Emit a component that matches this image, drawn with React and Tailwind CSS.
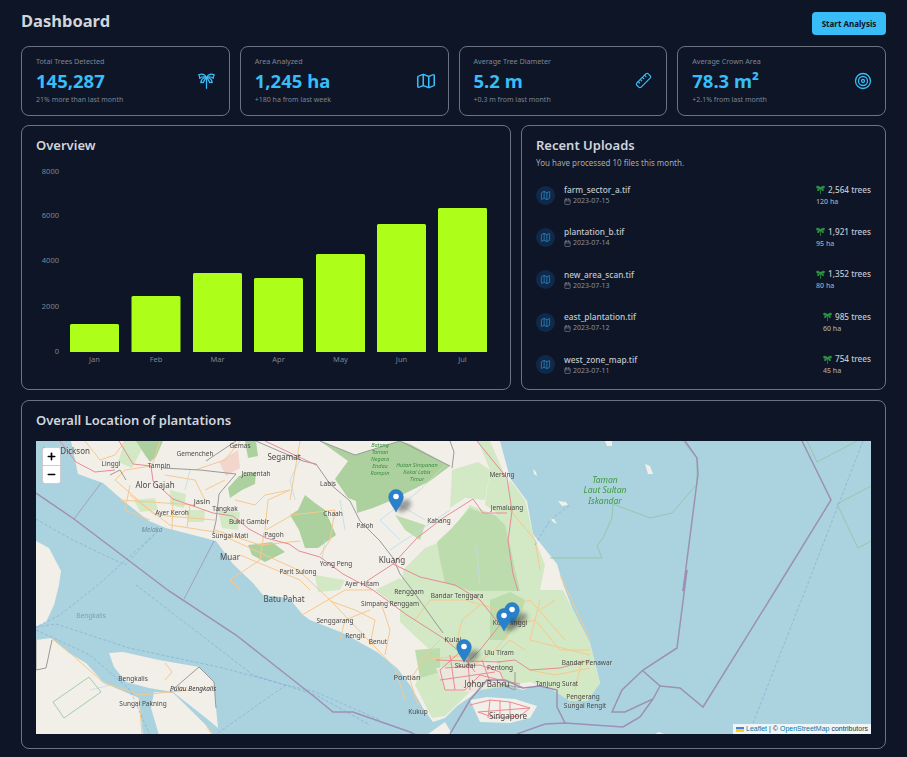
import { Map as MapIcon, Ruler, Target, Calendar, Plus, Minus } from 'lucide-react'

function PalmIcon({ className, filled }) {
  return (
    <svg viewBox="0 0 24 24" fill={filled ? 'currentColor' : 'none'} stroke="currentColor" strokeWidth="1.8" strokeLinejoin="round" strokeLinecap="round" className={className}>
      <path d="M12 23V8" fill="none" />
      <path d="M12 8C10 4 6 2 1 4c1 1 1.500 3 1.500 5 2-2 6-2.500 9.500-1z" />
      <path d="M12 8c2-4 6-6 11-4-1 1-1.500 3-1.500 5-2-2-6-2.500-9.500-1z" />
      <path d="M12 8c-4 0-7.500 2-8 7 1-.5 2.500-.5 3.500 0 .5-2.500 2.500-5 4.500-7z" />
      <path d="M12 8c4 0 7.500 2 8 7-1-.5-2.500-.5-3.500 0-.5-2.500-2.500-5-4.500-7z" />
    </svg>
  )
}

const STATS = [
  { label: 'Total Trees Detected', value: '145,287', note: '21% more than last month', icon: <PalmIcon className="h-[17px] w-[17px] text-[#38bdf8]" /> },
  { label: 'Area Analyzed', value: '1,245 ha', note: '+180 ha from last week', icon: <MapIcon width={22} height={18} preserveAspectRatio="none" strokeWidth={1.7} className="-mr-[3px] text-[#38bdf8]" /> },
  { label: 'Average Tree Diameter', value: '5.2 m', note: '+0.3 m from last month', icon: <Ruler size={17} strokeWidth={1.7} className="-scale-x-100 text-[#38bdf8]" /> },
  { label: 'Average Crown Area', value: '78.3 m²', note: '+2.1% from last month', icon: <Target size={18} strokeWidth={1.7} className="-mr-[1px] text-[#38bdf8]" /> },
]

const UPLOADS = [
  { name: 'farm_sector_a.tif', date: '2023-07-15', trees: '2,564 trees', area: '120 ha' },
  { name: 'plantation_b.tif', date: '2023-07-14', trees: '1,921 trees', area: '95 ha' },
  { name: 'new_area_scan.tif', date: '2023-07-13', trees: '1,352 trees', area: '80 ha' },
  { name: 'east_plantation.tif', date: '2023-07-12', trees: '985 trees', area: '60 ha' },
  { name: 'west_zone_map.tif', date: '2023-07-11', trees: '754 trees', area: '45 ha' },
]

const BARS = [
  { month: 'Jan', x: 70, top: 325 },
  { month: 'Feb', x: 131.5, top: 297 },
  { month: 'Mar', x: 193, top: 274 },
  { month: 'Apr', x: 254, top: 279 },
  { month: 'May', x: 316, top: 255 },
  { month: 'Jun', x: 377, top: 225 },
  { month: 'Jul', x: 438, top: 209 },
]

const TICKS = [
  { label: '8000', y: 172.5 },
  { label: '6000', y: 216 },
  { label: '4000', y: 261 },
  { label: '2000', y: 307 },
  { label: '0', y: 352.5 },
]

const LAND = [
  '71,441 78,474 103,483 126,503 149,521 166,528 216,541 233,564 253,583 263,595 289,598 303,615 310,620 343,633 377,652 397,668 410,685 423,708 433,722 445,718 457,706 470,697 487,682 505,684 523,690 540,684 553,690 570,701 587,701 600,683 590,643 573,610 563,584 557,564 533,534 527,501 510,478 500,441',
  '36,541 49,548 61,571 59,585 54,605 46,622 36,627',
  '36,640 51,638 69,653 86,663 104,683 139,698 143,735 36,735',
  '109,653 123,652 159,660 199,667 214,682 216,708 218,728 206,718 173,692 149,688 126,682 114,667',
  '154,692 173,693 206,725 213,735 159,735 151,708',
  '428,734 445,722 452,734',
  '645,464 650,466 653,474 648,474',
  '605,441 612,441 612,446 607,446',
  '558,501 566,502 568,505 562,506',
  '550,518 554,519 557,524 553,522',
  '533,469 536,472 537,476 534,474',
  '655,734 659,732 664,734',
]

const SOFT_GREEN = [
  '400,600 403,570 425,548 445,540 470,505 495,515 510,480 525,500 533,534 545,565 540,590 563,590 573,610 590,643 600,683 587,701 570,701 553,690 530,682 470,692 445,716 432,718 415,685 430,650 400,622',
  '478,441 490,441 506,478 512,505 500,515 485,505 490,470',
  '452,470 478,462 490,470 485,500 465,498 450,508',
  '118,462 132,468 146,441 125,441',
  '170,490 186,494 184,508 170,505',
  '134,500 155,498 158,510 140,512',
  '185,510 205,510 204,522 188,522',
  '218,510 240,512 238,530 222,528',
  '315,575 345,580 340,590 318,592',
  '375,590 400,578 412,590 395,605',
]

const FOREST = [
  '320,441 355,455 400,441 410,444 450,466 430,481 410,491 390,501 373,508 357,513 356,501 348,498 335,479 348,461',
  '305,495 315,503 325,510 336,535 318,548 305,548 299,530 290,515 298,510',
  '242,490 255,484 256,472 239,476 228,488 230,498',
  '136,441 163,441 156,457 150,462 145,455',
  '248,545 272,542 285,552 265,562 252,555',
  '245,441 256,441 258,456 248,458',
]

const MID_GREEN = [
  '440,560 437,542 450,530 470,508 480,512 495,515 505,525 510,545 515,570 520,591 470,591 445,583',
  '490,600 510,592 525,600 520,620 505,640 490,640',
  '415,650 440,648 440,672 420,678',
  '395,515 425,525 420,540 405,530',
]

const PINK = [
  '119,441 133,464 151,466 153,481 173,499 193,506 213,513 233,516 249,529 266,538 289,544 299,551 320,557 343,574 373,590 407,615 443,638 460,652 475,672',
  '367,581 393,564 417,538 443,518 473,499 483,513 507,513',
  '477,441 507,478 512,511 508,541 513,574 518,591',
  '460,652 440,670 445,690 465,690 480,675 500,680 520,684',
  '393,564 420,577 455,585 480,600 500,625 480,650 470,660',
  '470,705 490,700 510,702 530,708 520,716 495,718 478,712',
  '490,700 488,718',
  '500,700 500,718',
  '510,702 510,718',
  '478,712 530,708',
  '498,662 515,660 530,670 560,668 590,660',
  '445,668 480,665 500,672 505,684',
  '450,655 455,690',
  '468,660 470,690',
  '482,660 490,682',
  '440,680 495,672',
  '436,660 500,662',
  '60,441 76,462 95,472 115,470',
  '265,441 316,465',
]

const ORANGE = [
  '151,466 125,470 115,480 150,510 170,525 215,532 265,555 298,570 330,600 395,668 405,700',
  '173,499 172,530',
  '190,505 187,528',
  '120,500 195,505',
  '130,495 155,515 215,520',
  '215,530 260,545 300,541',
  '290,490 268,500 265,530',
  '266,530 292,515 335,510 330,540 320,555',
  '264,532 260,560 230,580 240,590',
  '240,555 300,580 310,590',
  '302,615 345,590 372,590',
  '330,601 355,610 375,620 370,645',
  '380,600 390,630 385,655',
  '415,620 430,600 465,600 500,610 530,600 565,640',
  '512,625 535,620 560,650 590,650',
  '590,640 560,575',
  '540,600 530,640 590,655',
  '512,630 495,650 475,665',
  '510,510 535,540 540,570',
  '480,605 462,620 455,650',
  '430,650 410,680 418,705',
  '160,441 152,466',
  '195,470 225,460 240,441',
  '300,441 295,470 290,500',
  '575,690 582,660 590,665',
  '104,683 140,695 190,690',
  '165,680 172,672 165,663',
  '173,692 206,725 212,735',
  '139,698 142,735',
  '51,638 70,653 104,683',
  '130,485 125,510 150,520',
  '165,475 195,480 205,500',
  '235,500 255,505 265,495 290,490',
  '225,480 205,490',
  '340,640 345,620 370,610',
  '440,640 420,660 470,655',
  '500,650 510,640 525,650',
  '590,668 555,675 530,670',
  '540,610 555,600',
  '85,441 100,460 115,455 125,441',
]

const GRAY_ROADS = [
  '163,468 200,470 236,474 219,494 216,521 213,534',
  '206,461 236,441',
  '256,441 279,451 303,461 316,464 330,484 350,501 360,521 380,541 393,558 400,574 413,591 430,615 443,633',
  '126,480 120,470 110,475',
  '400,441 450,466',
  '320,441 355,455 400,441',
  '170,692 199,667 214,682 216,708',
  '523,688 500,684 515,690 515,672',
  '450,441 454,452 452,468',
  '36,640 36,670 46,668 52,640',
]

const WATER_LINES = [
  '395,510 420,490 445,465',
  '400,540 380,520 400,505 425,520',
  '340,500 345,530',
  '390,550 420,530 450,510',
  '476,545 480,585',
  '300,460 290,480 295,500',
  '325,540 322,560',
  '190,470 185,490',
  '90,690 110,685 100,680',
]

const MAJOR_BORDER = [
  '36,493 74,519 169,591 236,635 316,698 333,712 353,712 410,732 416,735',
  '687,570 677,648 643,670 622,690 612,712 625,712 653,699 660,686 643,671',
  '660,686 680,688 703,707 775,591 831,500 802,441',
  '683,591 698,474 697,458 685,441',
  '687,570 683,591',
  '653,699 640,717 623,727 565,723 545,724 517,734',
  '565,723 557,707 557,690 540,686 523,688 505,680 487,680 470,700 450,734',
]

const MINOR_BORDER = [
  '101,483 74,519',
  '214,541 184,599',
]

const SHIPPING = [
  '863,441 805,591 753,723 745,735',
  '36,519 69,538 125,565 158,531',
  '158,531 99,584 60,615 36,627',
  '136,585 253,675 316,695 370,725',
  '36,627 56,624 129,648 223,668 286,685 316,692 380,720',
  '36,630 90,655 130,690 150,735',
  '286,685 215,735',
  '535,545 550,520 570,505',
]

const PARKS = [
  '683,441 697,458 697,484 672,513 650,518 618,506 613,504 612,518 603,538 597,546 602,558 550,558',
  '807,441 817,462 857,441',
  '871,486 837,504 858,548 871,541',
  '89,677 101,692 64,718 53,702 89,677',
]

const PLACES = [
  { t: 'Port Dickson', x: 90, y: 454, s: 8, a: 'end' },
  { t: 'Linggi', x: 111, y: 466, s: 6.5 },
  { t: 'Tampin', x: 159, y: 468, s: 6.5 },
  { t: 'Gemencheh', x: 195, y: 456, s: 6.5 },
  { t: 'Gemas', x: 240, y: 448, s: 6.5 },
  { t: 'Segamat', x: 284, y: 460, s: 8 },
  { t: 'Jementah', x: 256, y: 476, s: 6.5 },
  { t: 'Alor Gajah', x: 155, y: 488, s: 8 },
  { t: 'Jasin', x: 202, y: 504, s: 7.5 },
  { t: 'Tangkak', x: 225, y: 511, s: 6.5 },
  { t: 'Ayer Keroh', x: 172, y: 515, s: 6.5 },
  { t: 'Bukit Gambir', x: 249, y: 524, s: 6.5 },
  { t: 'Pagoh', x: 274, y: 537, s: 6.5 },
  { t: 'Sungai Mati', x: 230, y: 538, s: 6.5 },
  { t: 'Muar', x: 230, y: 560, s: 8 },
  { t: 'Parit Sulong', x: 298, y: 574, s: 6.5 },
  { t: 'Labis', x: 328, y: 486, s: 6.5 },
  { t: 'Chaah', x: 333, y: 516, s: 6.5 },
  { t: 'Paloh', x: 365, y: 528, s: 6.5 },
  { t: 'Kluang', x: 392, y: 563, s: 8 },
  { t: 'Yong Peng', x: 336, y: 566, s: 6.5 },
  { t: 'Ayer Hitam', x: 362, y: 586, s: 6.5 },
  { t: 'Kahang', x: 439, y: 523, s: 6.5 },
  { t: 'Mersing', x: 502, y: 477, s: 6.5 },
  { t: 'Jemaluang', x: 507, y: 510, s: 6.5 },
  { t: 'Renggam', x: 409, y: 594, s: 6.5 },
  { t: 'Bandar Tenggara', x: 457, y: 598, s: 6.5 },
  { t: 'Simpang Renggam', x: 390, y: 606, s: 6.5 },
  { t: 'Batu Pahat', x: 284, y: 602, s: 8 },
  { t: 'Senggarang', x: 335, y: 623, s: 6.5 },
  { t: 'Rengit', x: 355, y: 638, s: 6.5 },
  { t: 'Benut', x: 378, y: 644, s: 6.5 },
  { t: 'Pontian', x: 407, y: 680, s: 7.5 },
  { t: 'Kukup', x: 418, y: 714, s: 6.5 },
  { t: 'Kulai', x: 453, y: 642, s: 7.5 },
  { t: 'Skudai', x: 465, y: 668, s: 6.5 },
  { t: 'Ulu Tiram', x: 499, y: 655, s: 6.5 },
  { t: 'Pentong', x: 500, y: 670, s: 6.5 },
  { t: 'Johor Bahru', x: 487, y: 687, s: 8 },
  { t: 'Singapore', x: 508, y: 719, s: 8 },
  { t: 'Tanjung Surat', x: 557, y: 686, s: 6.5 },
  { t: 'Bandar Penawar', x: 587, y: 665, s: 6.5 },
  { t: 'Pengerang', x: 583, y: 699, s: 6.5 },
  { t: 'Sungai Rengit', x: 585, y: 708, s: 6.5 },
  { t: 'Kota Tinggi', x: 510, y: 625, s: 6.5 },
  { t: 'Bengkalis', x: 133, y: 681, s: 6.5 },
  { t: 'Sungai Pakning', x: 143, y: 706, s: 6.5 },
]

const PARK_LABELS = [
  { t: 'Batang', x: 380, y: 447 },
  { t: 'Taman', x: 380, y: 454 },
  { t: 'Negara', x: 380, y: 461 },
  { t: 'Endau', x: 380, y: 468 },
  { t: 'Rompin', x: 380, y: 475 },
  { t: 'Hutan Simpanan', x: 417, y: 467 },
  { t: 'Kekal Labis', x: 417, y: 474 },
  { t: 'Timur', x: 417, y: 481 },
]

const PINS = [
  { x: 396, y: 512 },
  { x: 512, y: 625 },
  { x: 504, y: 631 },
  { x: 464, y: 662 },
]

function Lines({ items, className }) {
  return items.map((points, i) => <polyline key={i} points={points} fill="none" className={className} />)
}

function Polys({ items, fill }) {
  return items.map((points, i) => <polygon key={i} points={points} fill={fill} />)
}

function PlantationMap() {
  return (
    <div className="relative h-[293px] overflow-hidden bg-[#aad3df]">
      <svg viewBox="36 441 835 293" className="block h-full w-full font-['Noto_Sans',sans-serif] blur-[0.3px]">
        <defs>
          <filter id="pin-shadow" x="-50%" y="-50%" width="200%" height="200%">
            <feGaussianBlur stdDeviation="2" />
          </filter>
        </defs>
        <Polys items={LAND} fill="#f2efe9" />
        <Polys items={SOFT_GREEN} fill="#d3e8c4" />
        <Polys items={MID_GREEN} fill="#bddcae" />
        <Polys items={FOREST} fill="#add19e" />
        <polygon points="219,462 238,450 240,468 226,476" fill="#f2d6ce" />
        <polygon points="470,700 487,697 515,699 537,706 530,718 510,723 480,722" fill="#f2efe9" />
        <polygon points="436,668 495,660 505,684 470,692 445,690" fill="#ece7dd" />
        <Lines items={WATER_LINES} className="stroke-[#bcdcea] stroke-[0.8]" />
        <Lines items={ORANGE} className="stroke-[#f7c88e] stroke-[1]" />
        <Lines items={GRAY_ROADS} className="stroke-[#9a9a9a] stroke-[1]" />
        <Lines items={PINK} className="stroke-[#e98a95] stroke-[1]" />
        <Lines items={PARKS} className="stroke-[#8cc5a0] stroke-[0.8]" />
        <Lines items={SHIPPING} className="stroke-[#7fa6cf] stroke-[0.6] [stroke-dasharray:3_2]" />
        <Lines items={MINOR_BORDER} className="stroke-[#9e94b5] stroke-[0.8]" />
        <Lines items={MAJOR_BORDER} className="stroke-[#9e90b3] stroke-[1.5]" />
        {PLACES.map((p) => (
          <text key={p.t} x={p.x} y={p.y} fontSize={p.s} textAnchor={p.a || 'middle'} fill="#4a4a4a">{p.t}</text>
        ))}
        {PARK_LABELS.map((p) => (
          <text key={p.t} x={p.x} y={p.y} fontSize="5.5" fontStyle="italic" textAnchor="middle" fill="#3f8f3f">{p.t}</text>
        ))}
        <text x="605" y="483" fontSize="8.5" fontStyle="italic" textAnchor="middle" fill="#3f9a3f">Taman</text>
        <text x="605" y="493" fontSize="8.5" fontStyle="italic" textAnchor="middle" fill="#3f9a3f">Laut Sultan</text>
        <text x="605" y="504" fontSize="8.5" fontStyle="italic" textAnchor="middle" fill="#3f9a3f">Iskandar</text>
        <text x="152" y="532" fontSize="6.5" fontStyle="italic" textAnchor="middle" fill="#6f8a99">Melaka</text>
        <text x="91" y="618" fontSize="6.5" textAnchor="middle" fill="#7f9fae">Bengkalis</text>
        <text x="193" y="691" fontSize="6.5" fontStyle="italic" textAnchor="middle" fill="#333">Pulau Bengkalis</text>
        {PINS.map((p, i) => (
          <g key={i}>
            <ellipse cx={p.x + 8} cy={p.y - 6} rx="8" ry="5" fill="#333" opacity="0.45" filter="url(#pin-shadow)" transform={`rotate(-35 ${p.x + 8} ${p.y - 6})`} />
            <path d={`M${p.x} ${p.y}c-1.5-4-7.3-9.5-7.3-15.2a7.3 7.3 0 0 1 14.6 0c0 5.7-5.8 11.2-7.3 15.2z`} fill="#2a81cb" stroke="#2272b5" strokeWidth="0.5" />
            <circle cx={p.x} cy={p.y - 15.5} r="2.8" fill="#fff" />
          </g>
        ))}
      </svg>
      <div className="absolute left-[6px] top-[6px] flex w-[19px] flex-col rounded-[3px] border border-black/20 bg-white text-black">
        <div className="flex h-[18px] items-center justify-center border-b border-[#ccc]"><Plus size={11} strokeWidth={3.5} /></div>
        <div className="flex h-[17px] items-center justify-center"><Minus size={11} strokeWidth={3.5} /></div>
      </div>
      <div className="absolute bottom-0 right-0 flex h-[10px] items-center gap-[2px] bg-white/80 px-[3px] font-['Liberation_Sans',sans-serif] text-[7px] text-[#333]">
        <span className="flex h-[5px] w-[8px] flex-col">
          <span className="h-1/2 bg-[#4c7be1]" />
          <span className="h-1/2 bg-[#ffd500]" />
        </span>
        <span className="text-[#0078a8]">Leaflet</span>
        <span>| ©</span>
        <span className="text-[#0078a8]">OpenStreetMap</span>
        <span>contributors</span>
      </div>
    </div>
  )
}

function OverviewChart() {
  return (
    <svg viewBox="36 165 462 210" className="mt-[9px] block h-[210px] w-[462px] font-['Noto_Sans',sans-serif]">
      {TICKS.map((t) => (
        <text key={t.label} x="59" y={t.y + 2.5} fontSize="7.5" textAnchor="end" fill="#7d8594">{t.label}</text>
      ))}
      {BARS.map((b) => (
        <g key={b.month}>
          <path d={`M${b.x} 353V${b.top + 1.5}a1.5 1.5 0 0 1 1.5-1.5h46a1.5 1.5 0 0 1 1.5 1.5V353z`} fill="#adff1a" />
          <text x={b.x + 24.5} y="362.5" fontSize="7.5" textAnchor="middle" fill="#7d8594">{b.month}</text>
        </g>
      ))}
    </svg>
  )
}

export default function App() {
  return (
    <div className="min-h-screen bg-[#0d1526] px-[21px] pb-2 pt-3 font-['Noto_Sans',sans-serif]">
      <div className="mb-[11px] flex h-[23px] items-start justify-between">
        <h1 className="text-[16.5px] font-bold leading-[18px] text-[#d1d5db]">Dashboard</h1>
        <button className="flex h-[23px] w-[74px] items-center justify-center rounded-[4px] bg-[#38bdf8] text-[8px] font-bold text-[#0d1526]">
          Start Analysis
        </button>
      </div>

      <div className="mb-[9.5px] grid grid-cols-4 gap-[10px]">
        {STATS.map(({ label, value, note, icon }) => (
          <div key={label} className="flex h-[69.5px] items-center justify-between rounded-lg border border-[#6b7280] px-[14px]">
            <div>
              <p className="text-[7.2px] leading-[10px] text-[#7d8594]">{label}</p>
              <p className="mt-[2px] text-[18.5px] font-bold leading-[26px] text-[#38bdf8]">{value}</p>
              <p className="mt-[1px] text-[7px] leading-[10px] text-[#7d8594]">{note}</p>
            </div>
            {icon}
          </div>
        ))}
      </div>

      <div className="mb-[10px] grid grid-cols-[490px_365px] gap-[10px]">
        <div className="h-[265px] rounded-lg border border-[#6b7280] px-[14px] pt-[10px]">
          <h2 className="text-[13px] font-semibold leading-[19px] text-[#d1d5db]">Overview</h2>
          <OverviewChart />
        </div>

        <div className="h-[265px] rounded-lg border border-[#6b7280] px-[14px] pt-[10px]">
          <h2 className="text-[13px] font-semibold leading-[19px] text-[#d1d5db]">Recent Uploads</h2>
          <p className="mt-[2px] text-[8px] leading-[12px] text-[#a3a9b3]">You have processed 10 files this month.</p>
          <div className="mt-[12px] flex flex-col gap-[14.4px]">
            {UPLOADS.map((u) => (
              <div key={u.name} className="flex h-[28px] items-center">
                <div className="flex h-[19px] w-[19px] items-center justify-center rounded-full bg-[#10294a]">
                  <MapIcon size={11} strokeWidth={1.6} className="text-[#2f8fc9]" />
                </div>
                <div className="ml-[9px] flex-1">
                  <p className="text-[8.3px] font-medium leading-[12px] text-[#c2c7d0]">{u.name}</p>
                  <p className="flex items-center gap-[2px] text-[7px] leading-[10px] text-[#8b92a0]">
                    <Calendar size={7} strokeWidth={2} />
                    {u.date}
                  </p>
                </div>
                <div className="flex flex-col items-start">
                  <p className="flex items-center gap-[3px] text-[8.2px] font-medium leading-[12px] text-[#c2c7d0]">
                    <PalmIcon filled className="h-[9px] w-[9px] text-[#2f9e44]" />
                    {u.trees}
                  </p>
                  <p className="mt-[1px] text-[7px] font-medium leading-[10px] text-[#a3a9b3]">{u.area}</p>
                </div>
              </div>
            ))}
          </div>
        </div>
      </div>

      <div className="h-[349px] rounded-lg border border-[#6b7280] px-[14px] pt-[10px]">
        <h2 className="mb-[11px] text-[13px] font-semibold leading-[19px] text-[#d1d5db]">Overall Location of plantations</h2>
        <PlantationMap />
      </div>
    </div>
  )
}
